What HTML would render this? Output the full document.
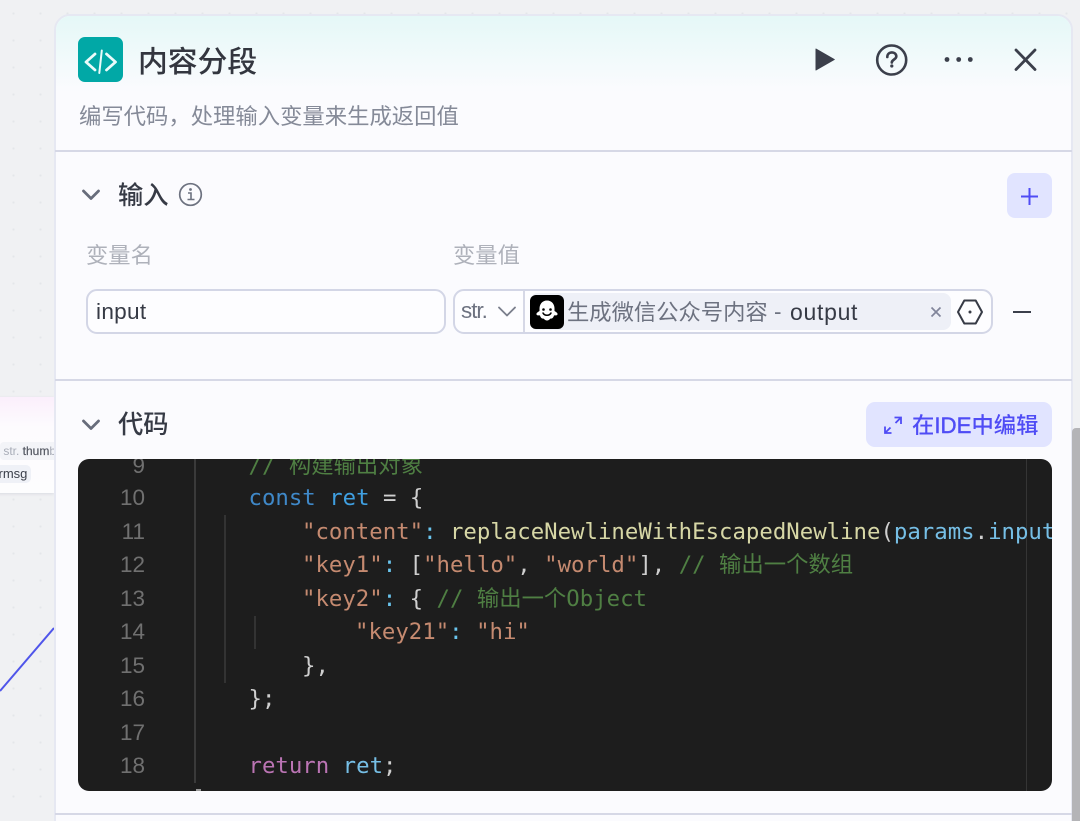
<!DOCTYPE html>
<html lang="zh"><head><meta charset="utf-8">
<style>
html,body{margin:0;padding:0;width:1080px;height:821px;overflow:hidden;background:#f0f1f3}
body{position:relative;font-family:"Liberation Sans","Noto Sans CJK SC",sans-serif}
.a{position:absolute;white-space:nowrap}
.cn{font-family:"Noto Sans CJK SC",sans-serif}
#bg{left:0;top:0;width:1080px;height:821px;background-image:radial-gradient(circle,#e4e6ea 1px,transparent 1.2px);background-size:27px 27px}
#node{left:-20px;top:397px;width:74px;height:96px;background:linear-gradient(#fbeffc,#fdfbfe 30px,#fdfdfe);box-shadow:0 1px 3px #d8dae2}
#panel{left:54px;top:14px;width:1015px;height:830px;border:2px solid #e6e8f2;border-radius:16px;background:#fbfbfe;overflow:hidden}
.hr{left:55px;width:1017px;height:2px;background:#d6d8e6}
.code{font-family:"DejaVu Sans Mono","Noto Sans CJK SC",monospace;font-size:22.35px;line-height:33.6px;color:#cfcfcf}
.n{font-family:"Liberation Sans",sans-serif;font-size:22.5px;color:#707070;width:49px;text-align:right;left:96px;line-height:33.6px}
.cm{color:#4f7f43}.kw{color:#3f88c8}.rt{color:#3f9fe0}.st{color:#c58a70}.fn{color:#d7d7a6}.pm{color:#76bfe6}.pk{color:#bb74b4}.cy{color:#6ac5ee}
</style></head><body>
<div class="a" id="bg"></div>
<div class="a" id="node"></div>
<div class="a" style="left:0;top:442px;width:54px;height:18px;background:#f3f4f8;border-radius:4px 0 0 4px;font-size:12px;line-height:18px;color:#a9adb8;overflow:hidden">&nbsp;str. <span style="color:#555963;-webkit-text-stroke:.2px #555963">thum</span>b_</div>
<div class="a" style="left:-10px;top:465px;width:41px;height:18px;background:#eff1f7;border-radius:5px;font-size:13px;line-height:18px;color:#3b3f4a;text-align:right">rrmsg&nbsp;</div>
<svg class="a" style="left:0;top:620px" width="55" height="80"><path d="M0 71L54 8" stroke="#4f55ea" stroke-width="2" fill="none"/></svg>

<div class="a" id="panel">
  <div class="a" style="left:0;top:0;width:1015px;height:76px;background:linear-gradient(#e5f8f7,#fbfbfe)"></div>
</div>
<div class="a hr" style="top:150px"></div>
<div class="a hr" style="top:379px"></div>
<div class="a hr" style="top:813px"></div>

<!-- header -->
<div class="a" style="left:78px;top:37px;width:45px;height:45px;border-radius:7px;background:#01a8a6"></div>
<svg class="a" style="left:78px;top:37px" width="45" height="45" fill="none" stroke="#eafbfa" stroke-width="2.8" stroke-linecap="round" stroke-linejoin="round"><path d="M17 17l-9 8 9 8M28.500 17l9 8-9 8"/><path d="M23.800 13.500L21.300 36" stroke-width="2"/></svg>
<div class="a cn" style="left:138px;top:36.500px;font-size:29.800px;line-height:44px;font-weight:500;color:#33363f">内容分段</div>
<div class="a cn" style="left:79px;top:99px;font-size:22.350px;line-height:33px;color:#858a98">编写代码，处理输入变量来生成返回值</div>
<svg class="a" style="left:810px;top:44px" width="230" height="34" fill="none" stroke="#3b3f4b">
  <path d="M6 5L24.300 15.500 6 26Z" fill="#3b3f4b" stroke-linejoin="round" stroke-width="1"/>
  <circle cx="81.700" cy="16" r="14.500" stroke-width="2.600"/>
  <path d="M77.300 13c0-6 9-6 9-.5 0 3-4.500 3-4.500 6" stroke-width="2.600" stroke-linecap="round"/>
  <circle cx="81.800" cy="22" r="1.600" fill="#3b3f4b" stroke="none"/>
  <g fill="#3b3f4b" stroke="none"><circle cx="137" cy="15.500" r="2.400"/><circle cx="148.700" cy="15.500" r="2.400"/><circle cx="160.300" cy="15.500" r="2.400"/></g>
  <path d="M206 6L225 25.500M225 6L206 25.500" stroke-width="2.800" stroke-linecap="round"/>
</svg>

<!-- input section -->
<svg class="a" style="left:80px;top:186px" width="24" height="18" fill="none" stroke="#676c7b" stroke-width="2.800" stroke-linecap="round" stroke-linejoin="round"><path d="M3.500 5l7.500 7.500L18.500 5"/></svg>
<div class="a cn" style="left:118px;top:176px;font-size:25.300px;line-height:37px;font-weight:500;color:#363a45">输入</div>
<svg class="a" style="left:178px;top:182px" width="25" height="25" fill="none" stroke="#6d7280"><circle cx="12.500" cy="12.500" r="10.800" stroke-width="1.700"/><path d="M10 11h3v6.500M9.500 17.500h7" stroke-width="1.600"/><circle cx="12.500" cy="7.500" r="1.400" fill="#6d7280" stroke="none"/></svg>
<div class="a" style="left:1007px;top:173px;width:45px;height:45px;border-radius:8px;background:#e1e4ff"></div>
<svg class="a" style="left:1007px;top:173px" width="45" height="45" stroke="#4f4cf5" stroke-width="2"><path d="M14 23.500h17M22.500 15v17"/></svg>
<div class="a cn" style="left:86px;top:238px;font-size:22.300px;line-height:33px;color:#aeb1ba">变量名</div>
<div class="a cn" style="left:453px;top:238px;font-size:22.300px;line-height:33px;color:#aeb1ba">变量值</div>
<div class="a" style="left:86px;top:289px;width:356px;height:41px;border:2px solid #d3d6e6;border-radius:11px;background:#fdfdff"></div>
<div class="a" style="left:96px;top:298px;font-size:22.600px;line-height:28px;color:#363a45;letter-spacing:.3px">input</div>
<div class="a" style="left:453px;top:289px;width:536px;height:41px;border:2px solid #d3d6e6;border-radius:11px;background:#fdfdff"></div>
<div class="a" style="left:461px;top:297px;font-size:22.400px;line-height:28px;color:#6d7280;letter-spacing:-1px">str.</div>
<svg class="a" style="left:497px;top:304px" width="20" height="15" fill="none" stroke="#7a7f8c" stroke-width="1.800" stroke-linecap="round" stroke-linejoin="round"><path d="M2 3.500l8 8 8-8"/></svg>
<div class="a" style="left:523px;top:291px;width:2px;height:41px;background:#d6d8e6"></div>
<div class="a" style="left:530px;top:293px;width:421px;height:37px;border-radius:8px;background:#eef0f7"></div>
<div class="a" style="left:530px;top:295px;width:33.500px;height:33.500px;border-radius:6px;background:#000"></div>
<svg class="a" style="left:530px;top:295px" width="34" height="34"><path d="M17 5.500c-5 0-7.500 4-7.500 8v2.500c-1.500 1-3.500 2-3 3.500 1 1.500 2.500.5 3.500 1 .5 2 2 3.500 3.500 3 1 1 2 2 3.500 2s2.500-1 3.500-2c1.500.5 3-1 3.500-3 1-.5 2.500.5 3.500-1 .5-1.500-1.500-2.500-3-3.500v-2.500c0-4-2.500-8-7.500-8z" fill="#fff"/><circle cx="13.500" cy="14.500" r="1.300" fill="#000"/><circle cx="20.500" cy="14.500" r="1.300" fill="#000"/><path d="M13 18c1.500 3 6.500 3 8 0" fill="none" stroke="#000" stroke-width="1.500" stroke-linecap="round"/></svg>
<div class="a cn" style="left:567px;top:295px;font-size:22.300px;line-height:33px;color:#6d7280">生成微信公众号内容</div>
<div class="a" style="left:774px;top:298px;font-size:22.500px;line-height:28px;color:#6d7280">-</div>
<div class="a" style="left:790px;top:298px;font-size:23px;line-height:28px;color:#363a45;letter-spacing:.7px">output</div>
<svg class="a" style="left:928px;top:304px" width="16" height="16" stroke="#81859a" stroke-width="1.700"><path d="M3.500 3.500l9 9M12.500 3.500l-9 9"/></svg>
<svg class="a" style="left:955px;top:297px" width="30" height="30" fill="none" stroke="#363a45" stroke-width="2"><path d="M9.300 3.500h11.400l6.300 11.500-6.300 11.500H9.300L3 15z" stroke-linejoin="round"/><circle cx="15" cy="15" r="1.500" fill="#363a45" stroke="none"/></svg>
<div class="a" style="left:1013px;top:310.500px;width:18px;height:2px;background:#3b3f4b"></div>

<!-- code section -->
<svg class="a" style="left:80px;top:416px" width="24" height="18" fill="none" stroke="#676c7b" stroke-width="2.800" stroke-linecap="round" stroke-linejoin="round"><path d="M3.500 5l7.500 7.500L18.500 5"/></svg>
<div class="a cn" style="left:118px;top:405px;font-size:25.300px;line-height:37px;font-weight:500;color:#363a45">代码</div>
<div class="a" style="left:866px;top:402px;width:186px;height:45px;border-radius:9px;background:#e1e4ff"></div>
<svg class="a" style="left:882px;top:414px" width="22" height="22" fill="none" stroke="#4f4cf5" stroke-width="1.800"><path d="M12.500 3.500H19V10M19 3.500l-5.500 5.500M9.500 19H3v-6.500M3 19l5.500-5.500"/></svg>
<div class="a cn" style="left:912px;top:407px;font-size:22.300px;line-height:34px;font-weight:500;color:#4f4cf5">在<span style="font-family:'Liberation Sans';-webkit-text-stroke:.4px #4f4cf5">IDE</span>中编辑</div>

<div class="a" style="left:78px;top:459px;width:974px;height:332px;border-radius:11px;background:#1d1d1d;overflow:hidden">
  <div class="a" style="left:116px;top:0;width:2px;height:324px;background:#3a3a3a"></div>
  <div class="a" style="left:146px;top:56px;width:2px;height:168px;background:#333"></div>
  <div class="a" style="left:176px;top:157px;width:2px;height:33px;background:#333"></div>
  <div class="a" style="left:948px;top:0;width:1px;height:332px;background:#353535"></div>
  <div class="a" style="left:118px;top:330px;width:5px;height:2px;background:#999"></div>
</div>
<div class="a" style="left:78px;top:459px;width:974px;height:332px;border-radius:11px;overflow:hidden">
  <div class="a n" style="left:18px;top:-10px">9</div>
  <div class="a n" style="left:18px;top:22px">10</div>
  <div class="a n" style="left:18px;top:56px">11</div>
  <div class="a n" style="left:18px;top:89px">12</div>
  <div class="a n" style="left:18px;top:123px">13</div>
  <div class="a n" style="left:18px;top:156px">14</div>
  <div class="a n" style="left:18px;top:190px">15</div>
  <div class="a n" style="left:18px;top:223px">16</div>
  <div class="a n" style="left:18px;top:257px">17</div>
  <div class="a n" style="left:18px;top:290px">18</div>
  <div class="a code cm" style="left:170.500px;top:-9px">// 构建输出对象</div>
  <div class="a code" style="left:170.500px;top:23px"><span class="kw">const</span> <span class="rt">ret</span> = {</div>
  <div class="a code" style="left:224px;top:57px"><span class="st">"content"</span><span class="cy">:</span> <span class="fn">replaceNewlineWithEscapedNewline</span>(<span class="pm">params</span>.<span class="pm">input</span></div>
  <div class="a code" style="left:224px;top:90px"><span class="st">"key1"</span><span class="cy">:</span> [<span class="st">"hello"</span>, <span class="st">"world"</span>], <span class="cm">// 输出一个数组</span></div>
  <div class="a code" style="left:224px;top:124px"><span class="st">"key2"</span><span class="cy">:</span> { <span class="cm">// 输出一个Object</span></div>
  <div class="a code" style="left:277px;top:157px"><span class="st">"key21"</span><span class="cy">:</span> <span class="st">"hi"</span></div>
  <div class="a code" style="left:224px;top:191px">},</div>
  <div class="a code" style="left:170.500px;top:224px">};</div>
  <div class="a code" style="left:170.500px;top:291px"><span class="pk">return</span> <span class="pm">ret</span>;</div>
</div>

<div class="a" style="left:1072px;top:428px;width:8px;height:393px;background:#b4b4b7;border-radius:4px 0 0 0"></div>
</body></html>
